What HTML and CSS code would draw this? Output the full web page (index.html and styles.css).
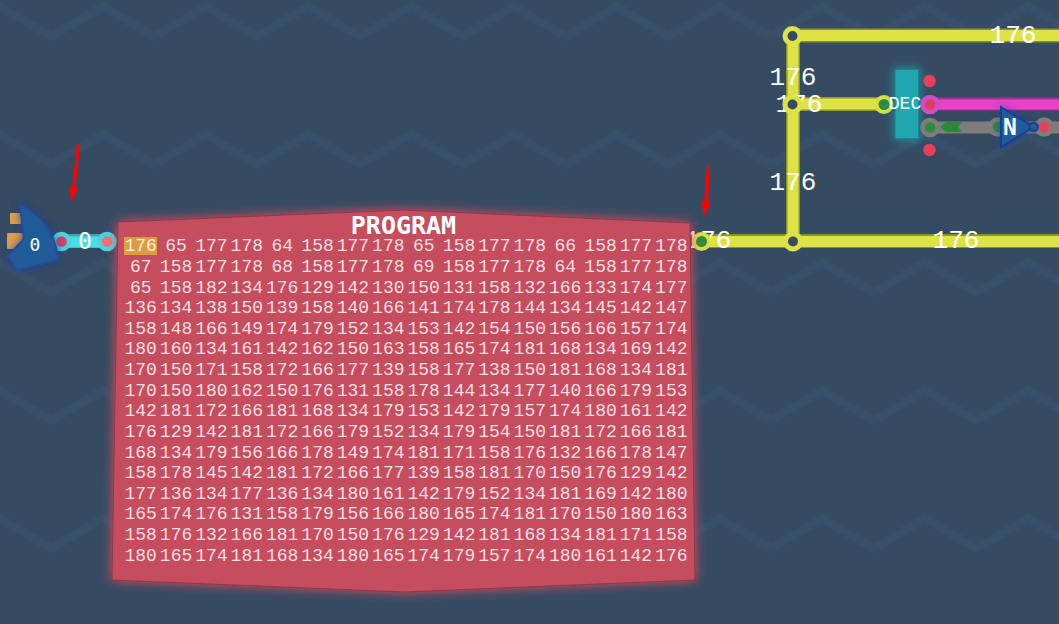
FILE: index.html
```
<!DOCTYPE html>
<html lang="en">
<head>
<meta charset="utf-8">
<title>Circuit board</title>
<link rel="stylesheet" href="styles.css">
</head>
<body>
<main class="board">
<svg class="circuit" aria-label="Circuit">
  <defs>
    <pattern id="zigzag" width="102.8" height="128" patternUnits="userSpaceOnUse">
      <path class="zig-halo" d="M-51.4 36.500 L0 6.500 L51.4 36.500 L102.8 6.500 L154.2 36.500"/>
      <path class="zig" d="M-51.4 36.500 L0 6.500 L51.4 36.500 L102.8 6.500 L154.2 36.500"/>
    </pattern>
    <filter id="glow" x="-20%" y="-20%" width="140%" height="140%"><feGaussianBlur stdDeviation="6"/></filter>
    <filter id="soft" x="-40%" y="-40%" width="180%" height="180%"><feGaussianBlur stdDeviation="4"/></filter>
  </defs>
  <rect width="100%" height="100%" fill="url(#zigzag)"/>

  <!-- yellow bus -->
  <g class="yellow">
    <path class="edge" d="M702 241H3000M793 36V241M793 35.500H3000M793 104H884"/>
    <path class="core" d="M702 241.5H3000M793 36V241M793 35.500H3000M793 104H884"/>
  </g>
  <g class="value">
    <text x="1013" y="43">176</text>
    <text x="793" y="85">176</text>
    <text x="799" y="112">176</text>
    <text x="793" y="190">176</text>
    <text x="956" y="248">176</text>
    <text x="708" y="248">176</text>
  </g>
  <g class="junction">
    <circle cx="792.5" cy="36" r="7.5"/>
    <circle cx="792.5" cy="104.5" r="7.5"/>
    <circle cx="793" cy="241.5" r="7.5"/>
  </g>
  <g class="port-yellow">
    <circle cx="884" cy="104.5" r="7.5"/>
    <circle cx="701.5" cy="241.5" r="7.5"/>
  </g>

  <!-- cyan wire -->
  <path d="M61 241H107" stroke="#35a9b2" stroke-width="14"/>
  <path d="M61 242H107" stroke="#45dfe8" stroke-width="11"/>
  <g stroke="#49d4df" stroke-width="4.5">
    <circle cx="61.5" cy="241.5" r="7.5" fill="#da405f"/>
    <circle cx="107" cy="241.5" r="7.5" fill="#ee7078"/>
  </g>
  <text class="wire-zero" x="85" y="249">0</text>

  <!-- selector gate -->
  <g fill="#dda047">
    <rect x="10" y="213" width="11" height="11" rx="1"/>
    <rect x="7" y="233" width="16" height="16" rx="1"/>
  </g>
  <path d="M20 205Q55 222 58 260L17 270L8 256L24 239Z" fill="#2436a8" filter="url(#soft)"/>
  <path class="gate gate-soft" d="M20 205Q55 222 58 260L17 270L8 256L24 239Z"/>
  <text class="gate-zero" x="35" y="251">0</text>

  <!-- decoder outputs -->
  <path d="M930 104H3000" stroke="#a93195" stroke-width="13"/>
  <path d="M930 104.5H3000" stroke="#e643ca" stroke-width="10"/>
  <path d="M930 127.5H3000" stroke="#626262" stroke-width="13"/>
  <path d="M930 127.5H3000" stroke="#7e7c7c" stroke-width="11"/>
  <path d="M940 127L946 122H962L958 127L962 132H946Z" fill="#2a8a36"/>
  <rect x="893" y="67" width="28" height="74" fill="#20a7b0" opacity=".6" filter="url(#soft)"/>
  <circle cx="930" cy="104.5" r="7.5" fill="#dc405e" stroke="#d14dc5" stroke-width="4.5"/>
  <g fill="#2e8b3c" stroke="#7e7c7c" stroke-width="4.5">
    <circle cx="930" cy="127.5" r="7.5"/>
    <circle cx="998" cy="127" r="7.5"/>
  </g>
  <circle cx="1044" cy="127" r="7.5" fill="#e8405c" stroke="#7e7c7c" stroke-width="4.5"/>
  <g fill="#e8405c">
    <circle cx="929.5" cy="81" r="6.2"/>
    <circle cx="929.5" cy="150" r="6.2"/>
  </g>
  <rect x="895" y="69.5" width="23.5" height="69" rx="1" fill="#20a7b0" stroke="#17858d"/>
  <text class="chip" x="905" y="109">DEC</text>

  <!-- inverter -->
  <path d="M1001 107L1034 127L1001 147Z" fill="#2436a8" opacity=".8" filter="url(#soft)"/>
  <path class="gate" d="M1001 107L1034 127L1001 147Z"/>
  <circle class="gate" cx="1033.5" cy="127" r="4.3"/>
  <text class="gate-name" x="1010" y="135">N</text>

  <!-- memory housing -->
  <path d="M118 222L404 210L690 223L695 580L404 592L112 580Z" fill="#ef4c5d" filter="url(#glow)"/>
  <path d="M118 222L404 210L690 223L695 580L404 592L112 580Z" fill="#c64d5e" stroke="#8f3949"/>

  <!-- pointers -->
  <g fill="#f00">
    <path d="M77 144Q79 142.500 80 145L75.500 188H78L72 202.500L69 187.500H72Z"/>
    <path d="M707 167Q708.5 164.500 710 167L708 202H710.500L704.500 217L701 201.500H704Z"/>
  </g>
</svg>

<section class="program">
  <h1 class="title">PROGRAM</h1>
  <table class="memory">
    <tbody>
    <tr><td><mark>176</mark></td><td>65</td><td>177</td><td>178</td><td>64</td><td>158</td><td>177</td><td>178</td><td>65</td><td>158</td><td>177</td><td>178</td><td>66</td><td>158</td><td>177</td><td>178</td></tr>
    <tr><td>67</td><td>158</td><td>177</td><td>178</td><td>68</td><td>158</td><td>177</td><td>178</td><td>69</td><td>158</td><td>177</td><td>178</td><td>64</td><td>158</td><td>177</td><td>178</td></tr>
    <tr><td>65</td><td>158</td><td>182</td><td>134</td><td>176</td><td>129</td><td>142</td><td>130</td><td>150</td><td>131</td><td>158</td><td>132</td><td>166</td><td>133</td><td>174</td><td>177</td></tr>
    <tr><td>136</td><td>134</td><td>138</td><td>150</td><td>139</td><td>158</td><td>140</td><td>166</td><td>141</td><td>174</td><td>178</td><td>144</td><td>134</td><td>145</td><td>142</td><td>147</td></tr>
    <tr><td>158</td><td>148</td><td>166</td><td>149</td><td>174</td><td>179</td><td>152</td><td>134</td><td>153</td><td>142</td><td>154</td><td>150</td><td>156</td><td>166</td><td>157</td><td>174</td></tr>
    <tr><td>180</td><td>160</td><td>134</td><td>161</td><td>142</td><td>162</td><td>150</td><td>163</td><td>158</td><td>165</td><td>174</td><td>181</td><td>168</td><td>134</td><td>169</td><td>142</td></tr>
    <tr><td>170</td><td>150</td><td>171</td><td>158</td><td>172</td><td>166</td><td>177</td><td>139</td><td>158</td><td>177</td><td>138</td><td>150</td><td>181</td><td>168</td><td>134</td><td>181</td></tr>
    <tr><td>170</td><td>150</td><td>180</td><td>162</td><td>150</td><td>176</td><td>131</td><td>158</td><td>178</td><td>144</td><td>134</td><td>177</td><td>140</td><td>166</td><td>179</td><td>153</td></tr>
    <tr><td>142</td><td>181</td><td>172</td><td>166</td><td>181</td><td>168</td><td>134</td><td>179</td><td>153</td><td>142</td><td>179</td><td>157</td><td>174</td><td>180</td><td>161</td><td>142</td></tr>
    <tr><td>176</td><td>129</td><td>142</td><td>181</td><td>172</td><td>166</td><td>179</td><td>152</td><td>134</td><td>179</td><td>154</td><td>150</td><td>181</td><td>172</td><td>166</td><td>181</td></tr>
    <tr><td>168</td><td>134</td><td>179</td><td>156</td><td>166</td><td>178</td><td>149</td><td>174</td><td>181</td><td>171</td><td>158</td><td>176</td><td>132</td><td>166</td><td>178</td><td>147</td></tr>
    <tr><td>158</td><td>178</td><td>145</td><td>142</td><td>181</td><td>172</td><td>166</td><td>177</td><td>139</td><td>158</td><td>181</td><td>170</td><td>150</td><td>176</td><td>129</td><td>142</td></tr>
    <tr><td>177</td><td>136</td><td>134</td><td>177</td><td>136</td><td>134</td><td>180</td><td>161</td><td>142</td><td>179</td><td>152</td><td>134</td><td>181</td><td>169</td><td>142</td><td>180</td></tr>
    <tr><td>165</td><td>174</td><td>176</td><td>131</td><td>158</td><td>179</td><td>156</td><td>166</td><td>180</td><td>165</td><td>174</td><td>181</td><td>170</td><td>150</td><td>180</td><td>163</td></tr>
    <tr><td>158</td><td>176</td><td>132</td><td>166</td><td>181</td><td>170</td><td>150</td><td>176</td><td>129</td><td>142</td><td>181</td><td>168</td><td>134</td><td>181</td><td>171</td><td>158</td></tr>
    <tr><td>180</td><td>165</td><td>174</td><td>181</td><td>168</td><td>134</td><td>180</td><td>165</td><td>174</td><td>179</td><td>157</td><td>174</td><td>180</td><td>161</td><td>142</td><td>176</td></tr>
    </tbody>
  </table>
</section>
</main>
</body>
</html>
```
FILE: styles.css
```
body {
  margin: 0;
  background: #354b62;
  font-family: "Liberation Mono", "Courier New", monospace;
  color: #fff;
}
.board {
  position: relative;
  min-height: 100vh;
  overflow: hidden;
}
.circuit {
  position: absolute;
  inset: 0;
  width: 100%;
  height: 100%;
}
.circuit text {
  fill: #fff;
  text-anchor: middle;
}
.zig,
.zig-halo {
  fill: none;
  stroke: #37516b;
  stroke-width: 6;
}
.zig-halo {
  stroke: #364e67;
  stroke-width: 9;
}
.yellow {
  fill: none;
}
.edge {
  stroke: #8d9129;
  stroke-width: 14;
}
.core {
  stroke: #dde345;
  stroke-width: 11;
}
.junction circle {
  fill: #354b62;
  stroke: #dde345;
  stroke-width: 5;
}
.port-yellow circle {
  fill: #2e8b3c;
  stroke: #d8df45;
  stroke-width: 4;
}
.gate {
  fill: #205d98;
  stroke: #173d96;
  stroke-width: 2;
}
.gate-soft {
  stroke: #20509a;
}
.value {
  font-size: 26px;
}
.wire-zero,
.gate-zero,
.gate-name,
.title {
  font-family: "DejaVu Sans Mono", "Liberation Mono", monospace;
}
.wire-zero {
  font-size: 23px;
}
.gate-zero {
  font-size: 18px;
}
.chip {
  font-size: 18px;
}
.gate-name {
  font-size: 23px;
  font-weight: bold;
}
.program {
  position: absolute;
  left: 123px;
  top: 212px;
  width: 566px;
}
.title {
  margin: 0;
  padding-top: 3px;
  padding-right: 5px;
  font-size: 25px;
  line-height: 21px;
  text-align: center;
}
.memory {
  width: 100%;
  height: 330px;
  table-layout: fixed;
  border-collapse: collapse;
  font-size: 18px;
  line-height: 18px;
  color: #f8dfe2;
}
.memory td {
  padding: 0;
  text-align: center;
  white-space: nowrap;
}
.memory mark {
  display: inline-block;
  background: #dc9b45;
  color: #fff0d8;
}
```
